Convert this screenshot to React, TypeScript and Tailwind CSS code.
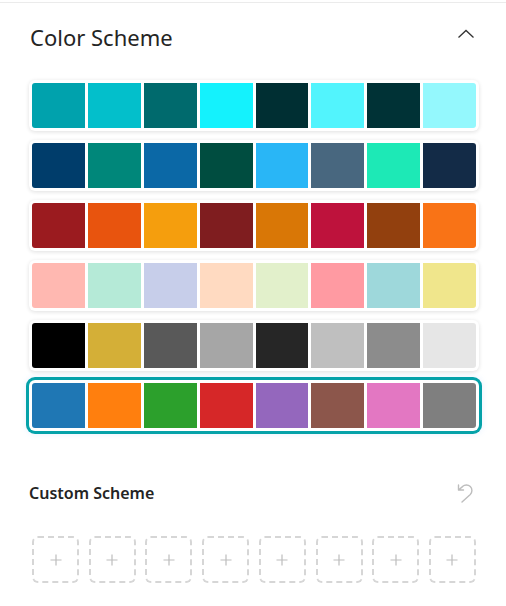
import { useState } from "react";

const schemes: string[][] = [
	["#00a2ad", "#03bfcb", "#006a6d", "#14f2fd", "#002f33", "#52f4fd", "#003236", "#94f8fd"],
	["#003d6b", "#00877a", "#0b68a6", "#004d40", "#29b6f6", "#48677f", "#1de9b6", "#132b47"],
	["#9b1b1f", "#e8540e", "#f59e0d", "#7f1d1f", "#d97706", "#be123c", "#92400e", "#f97316"],
	["#ffb8b1", "#b5ead7", "#c7ceea", "#ffdac1", "#e2f0cb", "#ff9aa2", "#9ed8db", "#f0e68c"],
	["#000000", "#d4af37", "#595959", "#a6a6a6", "#262626", "#bfbfbf", "#8c8c8c", "#e6e6e6"],
	["#1f77b4", "#ff7f0e", "#2ca02c", "#d62728", "#9467bd", "#8c564b", "#e377c2", "#7f7f7f"],
];

function SchemeRow({ colors, selected, onSelect }: { colors: string[]; selected: boolean; onSelect: () => void }) {
	return (
		<button
			type="button"
			onClick={onSelect}
			className={`flex w-full gap-[3px] rounded-[6px] bg-white p-[3px] ${
				selected
					? "ring-3 ring-[#05a2a9] shadow-[0_0_6px_3px_rgba(120,180,255,0.18)]"
					: "shadow-[0_1px_4px_rgba(0,0,0,0.13)]"
			}`}
		>
			{colors.map((c, i) => (
				<span
					key={i}
					className="h-[45px] flex-1 first:rounded-l-[3px] last:rounded-r-[3px]"
					style={{ backgroundColor: c }}
				/>
			))}
		</button>
	);
}

export default function App() {
	const [selected, setSelected] = useState(5);

	return (
		<div className="h-[606px] w-[506px] bg-white" style={{ fontFamily: '"Noto Sans", "Open Sans", sans-serif' }}>
			<div className="h-[2px]" />
			<div className="h-px bg-[#ebebeb]" />
			<div className="pl-[29px] pr-[27px]">
				<div className="flex h-[77px] items-center justify-between pb-[9px]">
					<h2 className="pl-px text-[22px] text-[#242424]">Color Scheme</h2>
					<svg width="18" height="10" viewBox="0 0 18 10" className="mr-[4px] mb-[6px]">
						<path d="M1.5 8.5 L9 1.5 L16.5 8.5" fill="none" stroke="#333" strokeWidth="1.3" />
					</svg>
				</div>
				<div className="flex flex-col gap-[9px]">
					{schemes.map((s, i) => (
						<SchemeRow key={i} colors={s} selected={selected === i} onSelect={() => setSelected(i)} />
					))}
				</div>
				<div className="mt-[50px] flex items-center justify-between">
					<h3 className="text-[16px] font-semibold text-[#242424]">Custom Scheme</h3>
					<svg width="20" height="22" viewBox="0 0 20 22" className="mr-[4px]">
						<path
							d="M3.5 3 V8 H8.5 M3.5 8 L7.5 4.6 A5.5 5.5 0 0 1 15.3 12.4 L7 20"
							fill="none"
							stroke="#bdbdbd"
							strokeWidth="1.4"
							strokeLinecap="round"
							strokeLinejoin="round"
						/>
					</svg>
				</div>
				<div className="mt-[31px] flex justify-between pl-[3px] pr-[3px]">
					{Array.from({ length: 8 }).map((_, i) => (
						<button
							key={i}
							type="button"
							className="flex h-[47px] w-[47px] items-center justify-center rounded-[6px] border-2 border-dashed border-[#d6d6d6]"
						>
							<svg width="12" height="12" viewBox="0 0 12 12">
								<path d="M6 0.5 V11.5 M0.5 6 H11.5" stroke="#bdbdbd" strokeWidth="1.2" />
							</svg>
						</button>
					))}
				</div>
			</div>
		</div>
	);
}
